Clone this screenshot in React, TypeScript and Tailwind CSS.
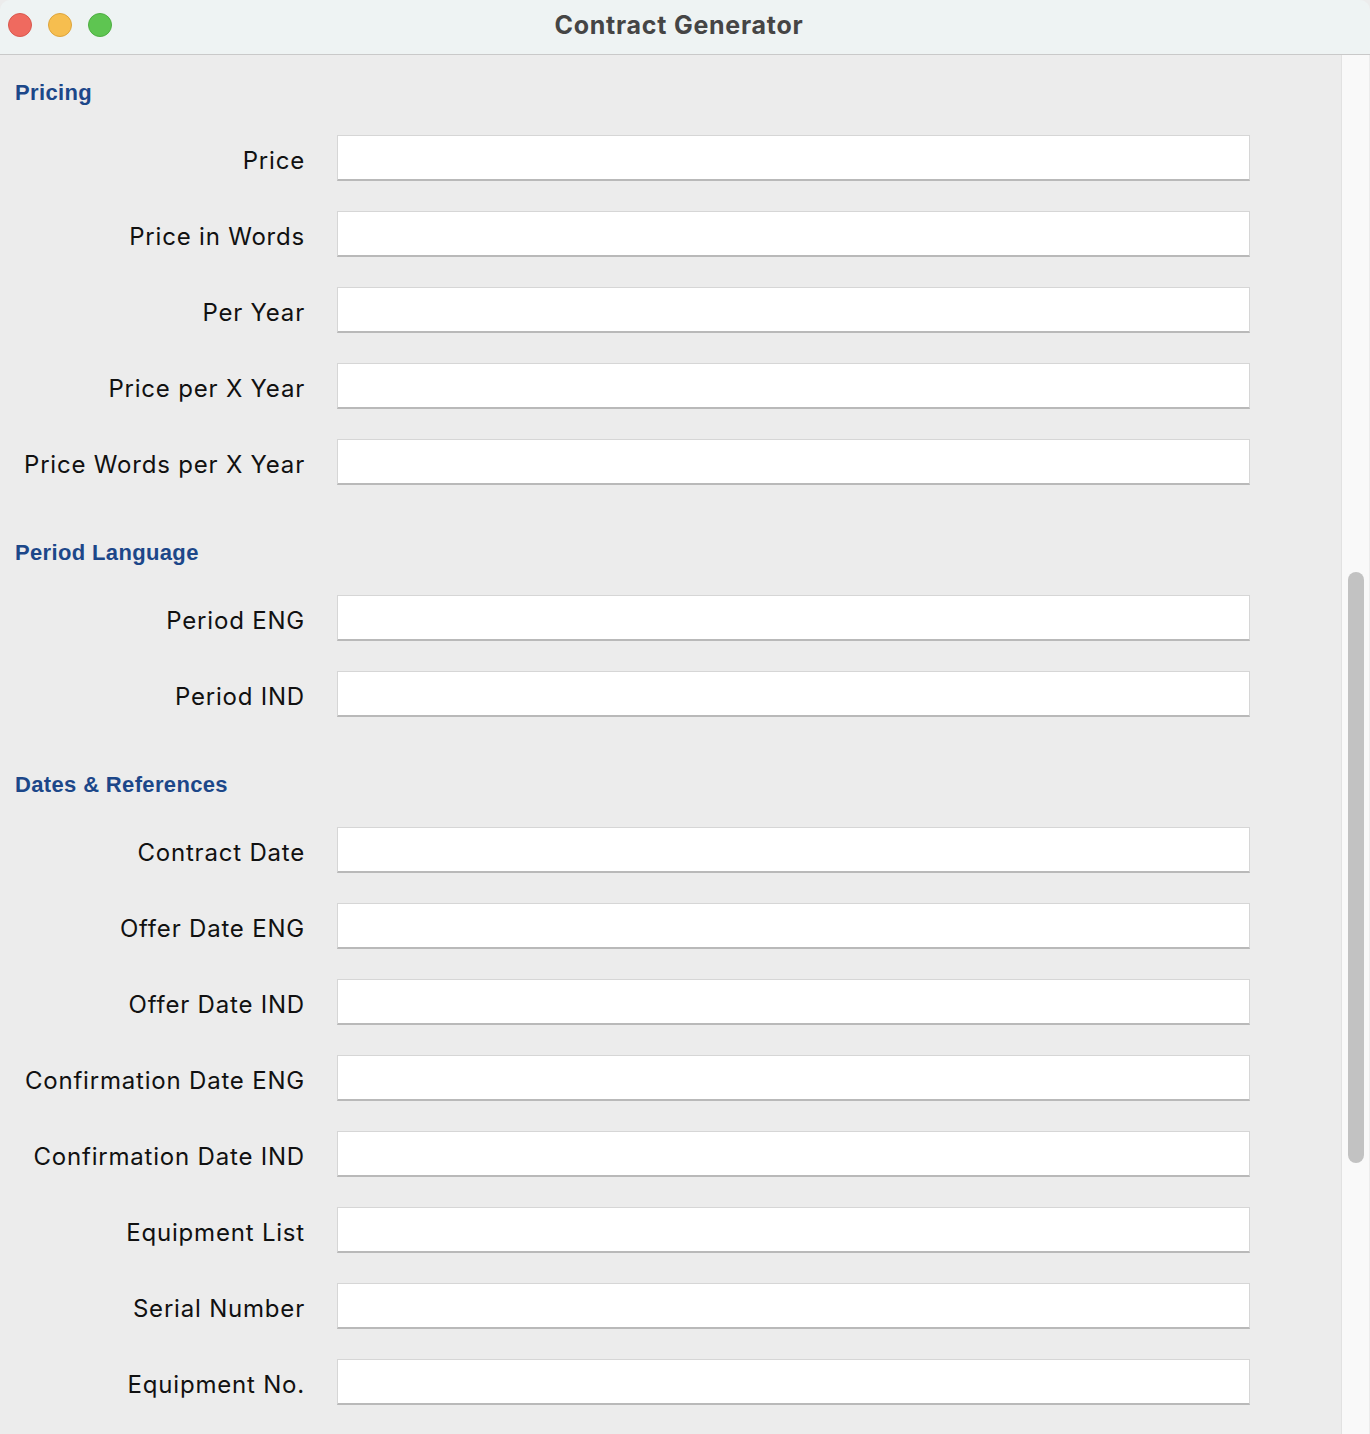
import React from "react";

const sections: { title: string; fields: string[] }[] = [
  {
    title: "Pricing",
    fields: ["Price", "Price in Words", "Per Year", "Price per X Year", "Price Words per X Year"],
  },
  { title: "Period Language", fields: ["Period ENG", "Period IND"] },
  {
    title: "Dates & References",
    fields: [
      "Contract Date",
      "Offer Date ENG",
      "Offer Date IND",
      "Confirmation Date ENG",
      "Confirmation Date IND",
      "Equipment List",
      "Serial Number",
      "Equipment No.",
    ],
  },
];

export default function App() {
  return (
    <div
      className="w-[1370px] h-[1434px] overflow-hidden bg-[#ececec] flex flex-col"
      style={{ fontFamily: "Inter, 'Noto Sans', sans-serif" }}
    >
      <div className="relative h-[55px] shrink-0 bg-[#eef3f3] border-b border-[#c9c9c9] flex items-center justify-center rounded-t-[10px]">
        <div className="absolute left-[8px] top-[13px] flex gap-[16px]">
          <span className="w-[24px] h-[24px] rounded-full bg-[#ef6a5f] border border-[#d9584e]" />
          <span className="w-[24px] h-[24px] rounded-full bg-[#f6be4f] border border-[#dea53c]" />
          <span className="w-[24px] h-[24px] rounded-full bg-[#5ec551] border border-[#4eae42]" />
        </div>
        <div className="text-[25px] font-bold text-[#454545] tracking-[0.75px] -mt-[2px] ml-[-12px]">
          Contract Generator
        </div>
      </div>
      <div className="flex flex-1 min-h-0">
        <div className="flex-1 pt-[24px] flex flex-col gap-[54px]">
          {sections.map((s) => (
            <div key={s.title} className="flex flex-col">
              <div
                className="pl-[15px] h-[28px] leading-[28px] text-[22px] font-bold text-[#1c4789] tracking-[0.35px] mb-[28px]"
                style={{ fontFamily: "'Liberation Sans', Arial, sans-serif" }}
              >
                {s.title}
              </div>
              <div className="flex flex-col gap-[30px]">
                {s.fields.map((f) => (
                  <div key={f} className="flex items-center h-[46px]">
                    <div className="w-[305px] text-right text-[24px] text-[#111] tracking-[0.8px] pt-[6px] leading-none whitespace-nowrap">
                      {f}
                    </div>
                    <div className="ml-[32px] w-[913px] h-[46px] bg-white border border-[#d6d6d6] border-b-[2px] border-b-[#b9b9b9]" />
                  </div>
                ))}
              </div>
            </div>
          ))}
        </div>
        <div className="w-[29px] shrink-0 bg-[#f9f9f9] border-l border-[#e2e2e2] border-r border-r-[#ececec] flex flex-col pt-[517px] pl-[6px]">
          <div className="w-[16px] h-[591px] rounded-full bg-[#c2c2c2]" />
        </div>
      </div>
    </div>
  );
}
